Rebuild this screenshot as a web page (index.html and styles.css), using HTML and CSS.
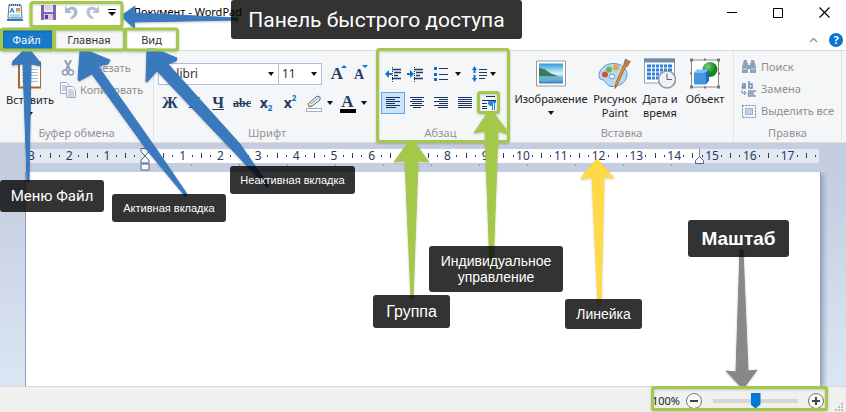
FILE: index.html
```
<!DOCTYPE html>
<html lang="ru">
<head>
<meta charset="utf-8">
<title>Документ - WordPad</title>
<link rel="stylesheet" href="styles.css">
</head>
<body>
<div class="window">
  <header class="titlebar">
    <svg class="app-icon" width="16" height="17" viewBox="0 0 16 17"><path d="M2 1h12l1 13H1z" fill="#fff" stroke="#3d79ab"/><path d="M2 1h12" stroke="#245f96" stroke-width="2" stroke-dasharray="1 1"/><path d="M3 9l2-5 2 5M4 7h3" stroke="#1676c8" fill="none"/><path d="M3 11h10M3 13h10M9 8h4" stroke="#79a9d0"/><path d="M9 4h4v3H9z" fill="#e48a45"/><path d="M0 15h16v2H0z" fill="#3179b5"/></svg>
    <div class="quick">
      <button aria-label="Сохранить"><svg width="15" height="15" viewBox="0 0 15 15"><path d="M0 0h15v15H0z" fill="#8460ad"/><path d="M3 0h9v7H3z" fill="#e9e8f4"/><path d="M4 2h7M4 4h7" stroke="#c0bfd8"/><path d="M3 9h9v6H3z" fill="#d4cce4"/><path d="M4 10h3v4H4z" fill="#5e3b88"/></svg></button>
      <button aria-label="Отменить"><svg width="14" height="15" viewBox="0 0 14 15"><path d="M1 1v7h7L5.500 5.500C8 4 10 5 10 7.500c0 2-1.500 3.500-4 5.500l2 1c4-2 5.500-4 5.500-7C13.500 2 8 0 3.500 3.500z" fill="#aab8d0"/></svg></button>
      <button aria-label="Вернуть"><svg width="14" height="15" viewBox="0 0 14 15"><path d="M13 1v7H6l2.500-2.500C6 4 4 5 4 7.500c0 2 1.500 3.500 4 5.500l-2 1C2 12 .5 10 .5 7 .5 2 6 0 10.500 3.500z" fill="#b6c1d3"/></svg></button>
      <button aria-label="Настройка панели"><svg width="8" height="7" viewBox="0 0 8 7"><path d="M0 .5h8" stroke="#111"/><path d="M0 3h8L4 7z" fill="#111"/></svg></button>
    </div>
    <h1 class="caption">Документ - WordPad</h1>
    <div class="system">
      <button aria-label="Свернуть"><svg width="11" height="11"><path d="M0 5.500h10" stroke="#000"/></svg></button>
      <button aria-label="Развернуть"><svg width="11" height="11"><path d="M.5 1.500h9v9h-9z" fill="none" stroke="#000"/></svg></button>
      <button aria-label="Закрыть"><svg width="11" height="11"><path d="M.5.500l10 10M10.500.500l-10 10" stroke="#000" stroke-width="1.200"/></svg></button>
    </div>
  </header>
  <nav class="tabs">
    <button class="tab file">Файл</button>
    <button class="tab home">Главная</button>
    <button class="tab">Вид</button>
    <div class="help">
      <button aria-label="Свернуть ленту"><svg width="9" height="6"><path d="M1 5l3.500-3.500L8 5" fill="none" stroke="#999" stroke-width="1.500"/></svg></button>
      <button class="help-mark" aria-label="Справка">?</button>
    </div>
  </nav>
  <main class="ribbon">
    <section class="group clipboard">
      <div class="tools">
        <button class="big"><svg width="26" height="30" viewBox="0 0 26 30"><path d="M1 2h23v27H1z" fill="#a9672f"/><path d="M3 4h20v23H3z" fill="#fff"/><path d="M5 10h16M5 13h16M5 16h16M5 19h16M5 22h16" stroke="#a8bdd5"/><path d="M7 0h11v5H7z" fill="#777"/></svg><span>Вставить</span><i class="down"></i></button>
        <div class="stack muted">
          <button class="line"><svg width="16" height="16" viewBox="0 0 16 16" fill="none" stroke="#8f9fb9"><path d="M5 0l5 10M11 0L6 10" stroke-width="2"/><circle cx="5" cy="12.500" r="2.500" stroke-width="1.500"/><circle cx="11" cy="12.500" r="2.500" stroke-width="1.500"/></svg>Вырезать</button>
          <button class="line"><svg width="16" height="16" viewBox="0 0 16 16" fill="#f6f8fb" stroke="#9daec6"><path d="M.5.500h6l3 3v8h-9z"/><path d="M2 4h5M2 6h5M2 8h5"/><path d="M6.500 4.500h6l3 3v8h-9z"/><path d="M8 8h5M8 10h6M8 12h6M8 14h6"/></svg>Копировать</button>
        </div>
      </div>
      <h2>Буфер обмена</h2>
    </section>
    <section class="group font">
      <div class="tools rows">
        <div class="row combos">
          <span class="combo face"><select aria-label="Шрифт"><option>Calibri</option></select></span>
          <span class="combo size"><select aria-label="Размер"><option>11</option></select></span>
          <button class="grow" aria-label="Увеличить"><b class="serif">A</b><i class="up-blue"></i></button>
          <button class="shrink" aria-label="Уменьшить"><b class="serif">A</b><i class="down-blue"></i></button>
        </div>
        <div class="row styles">
          <button class="serif bold">Ж</button>
          <button class="serif italic">К</button>
          <button class="serif under">Ч</button>
          <button class="serif strike">abc</button>
          <button class="script">x<sub>2</sub></button>
          <button class="script">x<sup>2</sup></button>
          <button class="marker" aria-label="Выделение"><svg width="16" height="17" viewBox="0 0 16 17"><path d="M.5 13.500h15v3H.5z" fill="#fff" stroke="#9fb0cc"/><path d="M3 12L2 9 11 1l3 1v3L6 11z" fill="#f4f3ed" stroke="#52678b"/><path d="M2 9l4 2-4 1z" fill="#d6a535"/><path d="M5 9l7-6" stroke="#7894bb"/></svg><i class="down"></i></button>
          <button class="color" aria-label="Цвет текста"><b class="serif">A</b><i class="down"></i></button>
        </div>
      </div>
      <h2>Шрифт</h2>
    </section>
    <section class="group paragraph">
      <div class="tools rows">
        <div class="row indents">
          <button aria-label="Уменьшить отступ"><svg width="16" height="15"><path d="M7 2.500h9M9 5.500h7M9 8.500h4M7 11.500h9" stroke="#1e3a64" stroke-width="1.500"/><path d="M7.500 0v15" stroke="#1e3a64" stroke-dasharray="1 1"/><path d="M0 7l4-4v3h3v2H4v3z" fill="#0873d5"/></svg></button>
          <button aria-label="Увеличить отступ"><svg width="16" height="15"><path d="M7 2.500h9M9 5.500h7M9 8.500h4M7 11.500h9" stroke="#1e3a64" stroke-width="1.500"/><path d="M7.500 0v15" stroke="#1e3a64" stroke-dasharray="1 1"/><path d="M7 7L3 3v3H0v2h3v3z" fill="#0873d5"/></svg></button>
          <button class="list" aria-label="Список"><svg width="15" height="14"><path d="M5 1.500h9M5 7.500h9M5 12.500h9" stroke="#1e3a64"/><path d="M0 0h3v3H0zM0 6h3v3H0zM0 11h3v3H0z" fill="#0873d5"/></svg><i class="down"></i></button>
          <button class="spacing" aria-label="Интервал"><svg width="16" height="16"><path d="M7 3.500h8M7 6.500h8M7 9.500h8M7 12.500h6" stroke="#1e3a64"/><path d="M2.500 0L5 4H3.500v3h-2V4H0zM2.500 16L5 12H3.500V9h-2v3H0z" fill="#0873d5"/></svg><i class="down"></i></button>
        </div>
        <div class="row aligns">
          <button class="on" aria-label="По левому краю"><svg width="15" height="12"><path d="M0 .5h14M0 2.500h9M0 4.500h14M0 6.500h9M0 8.500h14M0 10.500h10" stroke="#17345f"/></svg></button>
          <button aria-label="По центру"><svg width="15" height="12"><path d="M0 .5h14M2 2.500h10M0 4.500h14M2 6.500h10M0 8.500h14M3 10.500h8" stroke="#17345f"/></svg></button>
          <button aria-label="По правому краю"><svg width="15" height="12"><path d="M0 .5h14M5 2.500h9M0 4.500h14M5 6.500h9M0 8.500h14M4 10.500h10" stroke="#17345f"/></svg></button>
          <button aria-label="По ширине"><svg width="15" height="12"><path d="M0 .5h14M0 2.500h14M0 4.500h14M0 6.500h14M0 8.500h14M0 10.500h14" stroke="#17345f"/></svg></button>
          <button aria-label="Абзац"><svg width="15" height="14"><path d="M4 .5h9M0 4.500h14M0 7.500h5M0 10.500h5M0 12.500h5" stroke="#17345f"/><path d="M9 5h5v2H9z" fill="#278ae2"/><path d="M7 5h3v5H8L6 8V6z" fill="#278ae2"/><path d="M10.500 5v9M12.500 5v9" fill="none" stroke="#278ae2"/></svg></button>
        </div>
      </div>
      <h2>Абзац</h2>
    </section>
    <section class="group insert">
      <div class="tools">
        <button class="big image"><svg width="32" height="30" viewBox="0 0 32 30"><defs><linearGradient id="sky" x2="0" y2="1"><stop stop-color="#2c9bd8"/><stop offset=".5" stop-color="#d8f4fa"/><stop offset="1" stop-color="#2d7fc0"/></linearGradient></defs><path d="M1.500 2.500h29v25h-29z" fill="#fff" stroke="#999"/><path d="M4 5h24v20H4z" fill="url(#sky)"/><path d="M4 9l6 2 6 4 8 3H4z" fill="#397b5d"/><path d="M4 18h24v2L10 23l-6-1z" fill="#68b2d3"/></svg><span>Изображение</span><i class="down"></i></button>
        <button class="big paint"><svg width="34" height="32" viewBox="0 0 34 32"><path d="M15 6C7 6 1 12 1 18c0 5 2 3 5 5 3 3 3 6 9 6 8 0 14-6 14-12S24 6 15 6z" fill="#b5d9f5" stroke="#5d96c4"/><circle cx="7" cy="17" r="3" fill="#d75337"/><circle cx="11" cy="12" r="3" fill="#69b94e"/><circle cx="18" cy="10" r="3" fill="#e9a34b"/><circle cx="14" cy="19" r="2.500" fill="#fff" stroke="#5d96c4"/><path d="M28 8l-9 20-2 3 1-6 8-18z" fill="#ee982c" stroke="#ad6722"/><path d="M25 8l2-7 6 3-4 6z" fill="#b07b51"/></svg><span>Рисунок<br>Paint</span></button>
        <button class="big date"><svg width="32" height="32" viewBox="0 0 32 32"><path d="M.5 1.500h30v24H.5z" fill="#fff" stroke="#8ba0b5"/><path d="M0 1h31v4H0z" fill="#6e8caa"/><path d="M3 7h25v15H3z" fill="#2d82d7"/><path d="M7.500 7v15M11.500 7v15M15.500 7v15M19.500 7v15M23.500 7v15M3 10.500h25M3 14.500h25M3 18.500h25" stroke="#fff"/><circle cx="23" cy="22" r="8.500" fill="#eef1f4" stroke="#8e979f" stroke-width="1.500"/><path d="M23 16v6h5" fill="none" stroke="#53616e"/></svg><span>Дата и<br>время</span></button>
        <button class="big object"><svg width="30" height="30" viewBox="0 0 30 30"><defs><radialGradient id="ball" cx=".35" cy=".3"><stop stop-color="#7bd07b"/><stop offset="1" stop-color="#16861e"/></radialGradient></defs><path d="M1.500 1.500h27v27h-27z" fill="#fff" stroke="#888"/><circle cx="20" cy="11" r="7.500" fill="url(#ball)"/><path d="M4 14l3-3h12l-3 3z" fill="#83bdf0"/><path d="M4 14h12v12H4z" fill="#4296e4"/><path d="M16 14l3-3v11l-3 4z" fill="#2269ba"/><path d="M0 0h3v3H0zM27 0h3v3h-3zM0 27h3v3H0zM27 27h3v3h-3zM0 14h2v2H0zM28 14h2v2h-2zM14 0h2v2h-2zM14 28h2v2h-2z" fill="#777"/></svg><span>Объект</span></button>
      </div>
      <h2>Вставка</h2>
    </section>
    <section class="group edit">
      <div class="tools stack muted">
        <button class="line"><svg width="16" height="14"><path d="M3 0h3v3h1v10H1V7zM10 0h3l2 7v6H9V3h1zM6 5h4v4H6z" fill="#8fa1bd"/><path d="M2 9h4M10 9h4" stroke="#d4deea"/></svg>Поиск</button>
        <button class="line"><svg width="16" height="16" fill="none"><g stroke="#738aae" stroke-width="1.500"><path d="M1 3h3v4H1.500V5H4M8 0v7h3V3H8"/></g><g stroke="#8196b5" stroke-width="1.500"><path d="M7 10h3v5H7.500v-3H10M15 10h-3v5h3"/></g><path d="M1 9v3h3M3 10l2 2-2 2" stroke="#738aae"/></svg>Замена</button>
        <button class="line"><svg width="16" height="15"><path d="M1.500 1.500h13v12h-13z" fill="none" stroke="#7187a9" stroke-dasharray="2 1"/><path d="M4.500 4.500h7v6h-7z" fill="#c3d2e7" stroke="#9fb3d0"/></svg>Выделить все</button>
      </div>
      <h2>Правка</h2>
    </section>
  </main>
  <section class="workspace">
    <div class="ruler">
      <div class="scale"><span>3</span><span>2</span><span>1</span><span></span><span>1</span><span>2</span><span>3</span><span>4</span><span>5</span><span>6</span><span>7</span><span>8</span><span>9</span><span>10</span><span>11</span><span>12</span><span>13</span><span>14</span><span>15</span><span>16</span><span>17</span></div>
      <svg class="indent-mark" width="10" height="23" viewBox="0 0 10 23" fill="#f4f6fa" stroke="#52668a"><path d="M1 .5h8v3L5 8 1 3.500zM5 8l4 4v3H1v-3zM1 16h8v6H1z"/></svg>
      <svg class="right-mark" width="10" height="15" viewBox="0 0 10 15"><path d="M4.500 0v8" stroke="#7d8aa3"/><path d="M4.500 7.500l4 4v3h-8v-3z" fill="#f4f6fa" stroke="#52668a"/></svg>
      <div class="stops"></div>
    </div>
    <div class="page" role="textbox" aria-label="Текст документа"></div>
  </section>
  <footer class="status">
    <output>100%</output>
    <button aria-label="Мельче"><svg width="16" height="16"><circle cx="8" cy="8" r="7.500" fill="#fafafa" stroke="#777"/><path d="M4 8h8" stroke="#444" stroke-width="2"/></svg></button>
    <input type="range" min="0" max="100" value="50" aria-label="Масштаб">
    <button aria-label="Крупнее"><svg width="16" height="16"><circle cx="8" cy="8" r="7.500" fill="#fafafa" stroke="#777"/><path d="M4 8h8M8 4v8" stroke="#444" stroke-width="2"/></svg></button>
    <svg class="grip" width="9" height="9"><path d="M6 0h2v2H6zM3 3h2v2H3zM6 3h2v2H6zM0 6h2v2H0zM3 6h2v2H3zM6 6h2v2H6z" fill="#bbb"/></svg>
  </footer>

  <svg class="arrows" width="846" height="412" viewBox="0 0 846 412">
    <g fill="#3a79bd" stroke="#3a79bd" stroke-linejoin="round">
      <path d="M24 50h6l9 11 2 5-10-2-2 117h-2L23 64l-11 1 1-4z"/>
      <path d="M80 51h8l22 9-2 4-10 2 59 84 30 44-2 2-38-46-55-76-13 7-1-2z"/>
      <path d="M147 49h8l22 9-1 3-8 3 72 80 29 42-2 1-35-37-75-79-9 10-2 1z"/>
      <path d="M121 16l14-10-1 7 104 5v2l-104 2 1 7z"/>
    </g>
    <g fill="#a4c84a" stroke="#a4c84a" stroke-linejoin="round">
      <path d="M408 143h7l14 19-11-1-5 137h-2l-6-137-11 1z"/>
      <path d="M488 112h5l15 20v2l-10-3-5 137h-3l-5-137-11 2z"/>
    </g>
    <path d="M597 159l17 19-10-1-3 127h-3l-6-127-11 2 2-4z" fill="#ffda48" stroke="#ffda48" stroke-linejoin="round"/>
    <path d="M740 250h3l5 121 9-1-14 19-17-18 10 1z" fill="#888" stroke="#888" stroke-linejoin="round"/>
    <g fill="none" stroke="#a4c84a" stroke-width="3">
      <rect x="31" y="2.500" width="91" height="24" rx="2"/>
      <rect x="1.500" y="29" width="52" height="21" rx="2"/>
      <rect x="54.500" y="29" width="70" height="21" rx="2"/>
      <rect x="125.500" y="29" width="52" height="21" rx="2"/>
      <rect x="377.500" y="49.500" width="131" height="92" rx="2"/>
      <rect x="478.500" y="92.500" width="20" height="20" rx="2"/>
      <rect x="652.500" y="387.500" width="174" height="22" rx="2"/>
    </g>
  </svg>
  <p class="note quick-note">Панель быстрого доступа</p>
  <p class="note file-note">Меню Файл</p>
  <p class="note active-note">Активная вкладка</p>
  <p class="note inactive-note">Неактивная вкладка</p>
  <p class="note control-note">Индивидуальное управление</p>
  <p class="note group-note">Группа</p>
  <p class="note ruler-note">Линейка</p>
  <p class="note zoom-note">Маштаб</p>
</div>
</body>
</html>
```
FILE: styles.css
```
* { box-sizing: border-box; }
html, body { margin: 0; height: 100%; }
body { font: 11px/16px "Noto Sans", sans-serif; color: #222; background: #fff; overflow: hidden; }
button { margin: 0; padding: 0; border: 0; background: none; font: inherit; color: inherit; display: flex; align-items: center; justify-content: center; }
svg { display: block; flex: none; }
h1, h2, p { margin: 0; font-weight: normal; }

.window { position: relative; display: flex; flex-direction: column; min-height: 100vh; }

.titlebar { display: flex; align-items: center; height: 27px; padding: 0 16px 3px 7px; }
.quick { display: flex; align-items: center; gap: 8px; margin-left: 18px; }
.quick button { min-width: 14px; }
.quick button:last-child { min-width: 8px; }
.caption { flex: 1; margin-left: 17px; font-size: 11px; color: #000; }
.system { display: flex; gap: 35px; }

.tabs { display: flex; height: 23px; padding: 2px 3px 0 0; }
.tab { width: 53px; color: #333; }
.tab.file { background: #1979ca; color: #fff; }
.tab.home { width: 72px; background: #f5f6f7; }
.help { display: flex; align-items: center; gap: 11px; margin-left: auto; }
.help-mark { width: 14px; height: 14px; border-radius: 50%; background: #0873d5; color: #fff; font: bold 11px/14px "Noto Sans", sans-serif; }

.ribbon { display: flex; height: 93px; background: #f5f6f7; border-top: 1px solid #dadbdc; border-bottom: 1px solid #dadbdc; }
.group { display: flex; flex-direction: column; border-right: 1px solid #e2e3e4; padding-top: 5px; margin-bottom: 1px; }
.group h2 { font-size: 11px; line-height: 16px; color: #929292; text-align: center; }
.tools { display: flex; flex: 1; }
.clipboard { width: 154px; }
.font { width: 223px; padding-left: 4px; }
.paragraph { width: 133px; border: 0; padding-left: 4px; }
.paragraph h2 { padding-right: 10px; }
.insert { width: 224px; }
.edit { width: 108px; }

.big { flex-direction: column; justify-content: flex-start; gap: 1px; line-height: 14px; }
.big svg { height: 35px; }
.big .down { margin-top: 4px; }
.down { border: 3px solid transparent; border-top: 4px solid #111; border-bottom: 0; }
.clipboard .big { width: 60px; }
.clipboard .tools { padding-top: 1px; }
.stack { display: flex; flex-direction: column; }
.muted { color: #8f8f8f; }
.line { height: 22px; gap: 4px; justify-content: flex-start; white-space: nowrap; }
.edit .stack { padding-left: 7px; }

.rows { flex-direction: column; gap: 7px; padding-top: 7px; }
.row { display: flex; height: 22px; align-items: center; }
.combo { display: flex; position: relative; height: 22px; }
.combo::after { content: ""; position: absolute; right: 5px; top: 9px; border: 3px solid transparent; border-top: 4px solid #111; border-bottom: 0; pointer-events: none; }
.combo select { appearance: none; width: 100%; border: 1px solid #abbfd8; border-radius: 0; padding: 0 3px; background: #fff; font: inherit; font-size: 12px; color: #333; }
.face { width: 121px; }
.size { width: 44px; margin-left: -1px; }
.serif { font-family: "Liberation Serif", serif; font-weight: bold; color: #243c60; }
.grow, .shrink { align-items: flex-start; width: 22px; }
.grow { margin-left: 6px; }
.grow b { font-size: 17px; line-height: 24px; }
.shrink b { font-size: 14px; line-height: 25px; }
.grow i, .shrink i { margin: 3px 0 0 -2px; }
.up-blue { border: 3px solid transparent; border-bottom: 3px solid #0873d5; border-top: 0; }
.down-blue { border: 3px solid transparent; border-top: 3px solid #0873d5; border-bottom: 0; }
.styles button { height: 20px; width: 24px; font-size: 16px; }
.styles .italic { font-style: italic; }
.styles .under { text-decoration: underline; }
.styles .strike { font-size: 12px; text-decoration: line-through; }
.styles .script { width: 24px; font: bold 14px/16px "Noto Sans", sans-serif; color: #243c60; }
sub, sup { font-size: 8px; line-height: 10px; color: #0873d5; }
sub { align-self: flex-end; }
sup { align-self: flex-start; }
.styles .marker, .styles .color { width: 34px; gap: 5px; }
.color b { width: 16px; border-bottom: 4px solid #000; font-size: 17px; line-height: 15px; }

.indents { gap: 6px; padding-left: 4px; }
.indents button { gap: 6px; }
.indents .list { margin-left: 5px; }
.indents .spacing { margin-left: 5px; gap: 2px; }
.aligns button { width: 24px; height: 22px; }
.aligns .on { background: #cce3f8; border: 1px solid #64a5e3; }

.insert .image { width: 82px; }
.insert .paint { width: 46px; }
.insert .date { width: 44px; }
.insert .object { width: 46px; }

.workspace { flex: 1; display: flex; flex-direction: column; padding: 0 26px 0 25px; background: linear-gradient(#c5cee0 30px, #c7d0e2 60px, #dbe6f4); }
.ruler { position: relative; padding: 6px 0 9px; margin-right: 1px; }
.scale { display: grid; grid-template-columns: repeat(21, 1fr); height: 14px; font-size: 12px; color: #263c62; background: linear-gradient(90deg, #e4e8f1 15%, #fff 15%, #fff 85%, #e4e8f1 85%); }
.scale span { display: flex; justify-content: center; width: 100%; padding-right: 66%; line-height: 14px; white-space: nowrap; background: linear-gradient(#263c62, #263c62) 42% 6px / 1px 2px no-repeat, linear-gradient(#263c62, #263c62) 67% 4px / 1px 5px no-repeat, linear-gradient(#263c62, #263c62) 92% 6px / 1px 2px no-repeat; }
.indent-mark { position: absolute; left: 115px; top: 5px; }
.right-mark { position: absolute; left: 85%; top: 6px; margin-left: -5px; }
.stops { height: 2px; margin: 1px 15% -3px; background: repeating-linear-gradient(90deg, transparent 0 47px, #8e9ab0 47px 48px); }
.page { flex: 1; background: #fff; border-left: 1px solid #8f9db8; box-shadow: 1px 0 0 #8f9db8, 4px 2px 5px #97a6c0; clip-path: inset(0 -8px 0 0); }

.status { display: flex; align-items: center; height: 26px; padding: 2px 2px 0 0; background: #f0f0f0; border-top: 1px solid #d7d7d7; }
.status output { margin-left: auto; font-size: 11px; }
.status button { margin: 0 7px 0 6px; }
.status input { appearance: none; width: 91px; height: 16px; margin: 0 1px; background: linear-gradient(#d6d6d6, #d6d6d6) center / 85px 4px no-repeat; }
.status input::-webkit-slider-thumb { appearance: none; width: 10px; height: 16px; background: #0078d7; clip-path: polygon(0 0, 100% 0, 100% 75%, 50% 100%, 0 75%); }
.grip { align-self: flex-end; margin-left: 4px; }

.arrows { position: absolute; left: 0; top: 0; pointer-events: none; filter: drop-shadow(0 1px 1px rgba(0, 0, 0, .2)); }
.note { position: absolute; display: flex; justify-content: center; align-items: center; text-align: center; border-radius: 3px; background: rgba(0, 0, 0, .8); color: #fff; font-family: "Liberation Sans", sans-serif; white-space: nowrap; }
.quick-note { left: 231px; top: 0; width: 291px; height: 39px; font-family: Roboto, sans-serif; font-size: 21px; }
.file-note { left: 0; top: 180px; width: 104px; height: 32px; font-family: Roboto, sans-serif; font-size: 15px; }
.active-note { left: 112px; top: 194px; width: 114px; height: 28px; font-size: 11px; }
.inactive-note { left: 230px; top: 166px; width: 125px; height: 28px; font-size: 11px; }
.control-note { left: 429px; top: 246px; width: 134px; height: 46px; font-size: 14px; line-height: 16px; white-space: normal; }
.group-note { left: 373px; top: 295px; width: 77px; height: 33px; font-size: 16px; }
.ruler-note { left: 565px; top: 299px; width: 77px; height: 30px; font-size: 14px; }
.zoom-note { left: 688px; top: 220px; width: 101px; height: 37px; font-size: 19px; font-weight: bold; }
```
